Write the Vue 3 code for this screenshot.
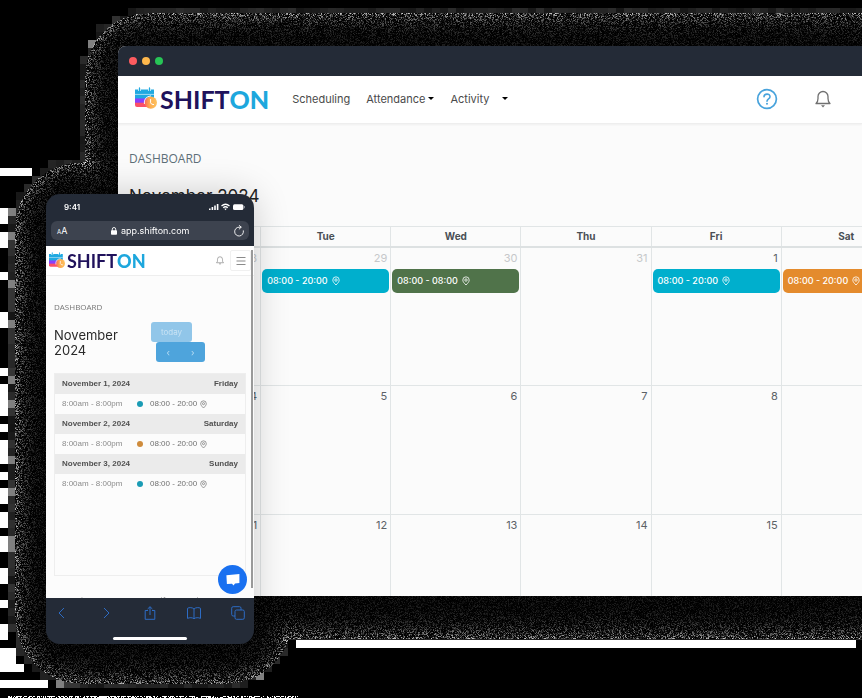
<script setup>
import { ref, onMounted, onBeforeUnmount } from 'vue'

const days = ['Mon', 'Tue', 'Wed', 'Thu', 'Fri', 'Sat', 'Sun']
const weeks = [
  [
    { n: 28, out: true },
    { n: 29, out: true, time: '08:00 - 20:00', tone: 'cyan' },
    { n: 30, out: true, time: '08:00 - 08:00', tone: 'green' },
    { n: 31, out: true },
    { n: 1, time: '08:00 - 20:00', tone: 'cyan' },
    { n: 2, time: '08:00 - 20:00', tone: 'orange' },
    { n: 3 }
  ],
  [4, 5, 6, 7, 8, 9, 10].map((n) => ({ n })),
  [11, 12, 13, 14, 15, 16, 17].map((n) => ({ n }))
]
const agenda = [
  { date: 'November 1, 2024', day: 'Friday', tone: 'cyan' },
  { date: 'November 2, 2024', day: 'Saturday', tone: 'orange' },
  { date: 'November 3, 2024', day: 'Sunday', tone: 'cyan' }
]

const grain = ref(null)

// Depth of a point inside a rounded rectangle; negative when outside.
function depth(x, y, l, t, r, b, rad) {
  const qx = Math.abs(x - (l + r) / 2) - (r - l) / 2 + rad
  const qy = Math.abs(y - (t + b) / 2) - (b - t) / 2 + rad
  const out = Math.hypot(Math.max(qx, 0), Math.max(qy, 0))
  return rad - out - Math.min(Math.max(qx, qy), 0)
}

function drawGrain() {
  const cv = grain.value
  if (!cv) return
  const w = (cv.width = cv.clientWidth)
  const h = (cv.height = cv.clientHeight)
  if (!w || !h) return
  const ctx = cv.getContext('2d')
  let seed = 7321
  const rnd = () => {
    seed = (Math.imul(seed, 1664525) + 1013904223) >>> 0
    return seed / 4294967296
  }
  const halo = (x, y) => {
    const a = depth(x, y, 85, 13, w + 400, 638, 62)
    const b = depth(x, y, 15, 162, 292, 683, 66)
    return { d: Math.max(a, b), both: a > -6 && b > -6 ? Math.min(a, b) : -99 }
  }
  ctx.fillStyle = '#000'
  ctx.fillRect(0, 0, w, h)

  ctx.fillStyle = '#fff'
  const bars = [
    [168, 8, 32], [208, 16, 16], [232, 16, 8], [272, 8, 8], [312, 16, 8],
    [368, 8, 8], [384, 32, 8], [424, 8, 8], [440, 24, 8], [472, 8, 8],
    [488, 16, 8], [512, 16, 8], [536, 16, 8], [568, 16, 8], [600, 8, 8],
    [624, 16, 8], [648, 16, 16], [664, 8, 24], [680, 8, 48]
  ]
  bars.forEach(([y, bh, bw]) => ctx.fillRect(0, y, bw, bh))
  ctx.fillRect(296, 640, w - 302, 8)

  for (let y = 0; y < h; y += 8) {
    for (let x = 0; x < w; x += 8) {
      const { d } = halo(x + 4, y + 4)
      if (d > -5 && d < 8) {
        const k = rnd()
        const g = Math.round(d < -1 ? (k > 0.86 ? 128 : 20 + k * 40) : 22 + k * 24)
        ctx.fillStyle = `rgb(${g},${g},${g})`
        ctx.fillRect(x, y, 8, 8)
      }
    }
  }

  const img = ctx.getImageData(0, 0, w, h)
  for (let y = 0; y < h; y++) {
    for (let x = 0; x < w; x++) {
      const { d, both } = halo(x, y)
      if (d < 0) continue
      let amp = 28 + 180 * Math.exp(-d / 9)
      if (both > -6) amp += 60 * Math.exp(-Math.abs(both) / 6) * Math.exp(-d / 14)
      const g = Math.round(amp * Math.pow(rnd(), 2.6))
      const i = (y * w + x) * 4
      img.data[i] = img.data[i + 1] = img.data[i + 2] = g
    }
  }
  ctx.putImageData(img, 0, 0)

  ctx.fillStyle = '#fff'
  for (let x = 8; x < 298; x++) {
    if (rnd() > 0.4) ctx.fillRect(x, 696, 1, 1)
    if (rnd() > 0.55) ctx.fillRect(x, 697, 1, 1)
  }
}

onMounted(() => {
  drawGrain()
  window.addEventListener('resize', drawGrain)
})
onBeforeUnmount(() => window.removeEventListener('resize', drawGrain))
</script>

<template>
  <svg class="defs" aria-hidden="true">
    <defs>
      <linearGradient id="calFill" x1="0" y1="0" x2="0" y2="1">
        <stop offset="0" stop-color="#1fa9e1" />
        <stop offset="0.48" stop-color="#1fa9e1" />
        <stop offset="0.54" stop-color="#8a3ffc" />
        <stop offset="0.72" stop-color="#8a3ffc" />
        <stop offset="0.8" stop-color="#fb5068" />
        <stop offset="1" stop-color="#fb5068" />
      </linearGradient>
      <linearGradient id="clockFill" x1="0" y1="0" x2="1" y2="0">
        <stop offset="0" stop-color="#fb6a55" />
        <stop offset="0.4" stop-color="#fdaa4e" />
        <stop offset="1" stop-color="#fdc25f" />
      </linearGradient>
    </defs>
    <symbol id="mark" viewBox="0 0 22 23">
      <path d="M0 2.5H19V20H2Q0 20 0 18Z" fill="url(#calFill)" />
      <path d="M0 7.4H19" stroke="#fff" stroke-width="0.6" />
      <path d="M4.500 1V4M14.500 1V4" stroke="#fff" stroke-width="2.600" />
      <path d="M4.500 1V4.300M14.500 1V4.300" stroke="#1fa9e1" stroke-width="1.300" stroke-linecap="round" />
      <circle cx="15.800" cy="15.600" r="6.200" fill="url(#clockFill)" />
      <path d="M15.600 12.500V15.800Q16 17.600 18.600 17.600" fill="none" stroke="#fff" stroke-width="1" stroke-linecap="round" />
      <path d="M9.400 17Q8.400 10 16 8.800" fill="none" stroke="#fff" stroke-width="0.900" />
    </symbol>
    <symbol id="pin" viewBox="0 0 10 12">
      <path d="M5 11C2.6 8.6 1 6.8 1 4.8a4 4 0 0 1 8 0C9 6.8 7.4 8.6 5 11Z" fill="none" stroke="currentColor" />
      <circle cx="5" cy="4.8" r="1.5" fill="none" stroke="currentColor" />
    </symbol>
    <symbol id="bell" viewBox="0 0 16 18">
      <path d="M1 13.5H15C13.4 12.3 13 10.8 13 8.5V6.5A5 5 0 0 0 3 6.5V8.5C3 10.8 2.6 12.3 1 13.5Z" fill="none" stroke="currentColor" stroke-width="1.3" stroke-linejoin="round" />
      <path d="M6 15.2H10L8 17.4Z" fill="currentColor" />
    </symbol>
  </svg>

  <main class="stage">
    <canvas ref="grain" class="grain" aria-hidden="true"></canvas>

    <section class="browser">
      <div class="titlebar">
        <span class="light red"></span>
        <span class="light amber"></span>
        <span class="light lime"></span>
      </div>
      <header class="topnav">
        <a href="#" class="logo">
          <svg class="mark"><use href="#mark" /></svg>
          <span>SHIFT<b>ON</b></span>
        </a>
        <nav class="links">
          <a href="#">Scheduling</a>
          <a href="#">Attendance<i class="caret"></i></a>
          <a href="#" class="wide">Activity<i class="caret"></i></a>
        </nav>
        <div class="tools">
          <button type="button" aria-label="Help">
            <svg class="help" viewBox="0 0 22 22">
              <circle cx="11" cy="11" r="9.4" fill="none" stroke="currentColor" stroke-width="1.7" />
              <path d="M8 8.8C8 5.2 14 5.2 14 8.7C14 10.8 11 10.9 11 13.2" fill="none" stroke="currentColor" stroke-width="1.6" stroke-linecap="round" />
              <circle cx="11" cy="15.8" r="1" fill="currentColor" />
            </svg>
          </button>
          <button type="button" aria-label="Notifications">
            <svg class="bell"><use href="#bell" /></svg>
          </button>
        </div>
      </header>
      <div class="content">
        <p class="crumb">DASHBOARD</p>
        <h1>November 2024</h1>
        <table class="calendar">
          <thead>
            <tr><th v-for="d in days" :key="d" scope="col">{{ d }}</th></tr>
          </thead>
          <tbody>
            <tr v-for="(week, i) in weeks" :key="i">
              <td v-for="c in week" :key="c.n">
                <div class="num" :class="{ out: c.out }">{{ c.n }}</div>
                <div v-if="c.time" class="event" :class="c.tone">
                  {{ c.time }}<svg class="pin"><use href="#pin" /></svg>
                </div>
              </td>
            </tr>
          </tbody>
        </table>
      </div>
    </section>

    <section class="phone">
      <div class="status">
        <span>9:41</span>
        <svg viewBox="0 0 36 8">
          <path d="M0 5.5h1.6V7H0ZM2.6 4h1.6v3H2.6ZM5.2 2.5h1.6V7H5.2ZM7.8 1h1.6v6H7.8Z" fill="#fff" />
          <path d="M12.5 3Q16.5 -0.6 20.5 3M14.2 4.8Q16.5 2.8 18.8 4.8" fill="none" stroke="#fff" stroke-width="1.3" />
          <path d="M15.2 5.8Q16.5 5 17.8 5.8L16.5 7.3Z" fill="#fff" />
          <rect x="24" y="1.3" width="10.4" height="5.6" rx="1.5" fill="#fff" />
          <path d="M35.3 3v2.2" stroke="#9aa0aa" />
        </svg>
      </div>
      <div class="address">
        <span class="aa"><small>A</small>A</span>
        <span class="url">
          <svg viewBox="0 0 6 8"><rect y="3.2" width="6" height="4.6" rx="0.8" fill="#fff" /><path d="M1.3 4V2.2a1.7 1.7 0 0 1 3.4 0V4" fill="none" stroke="#fff" stroke-width="0.9" /></svg>
          app.shifton.com
        </span>
        <button type="button" aria-label="Reload">
          <svg class="reload" viewBox="0 0 12 12"><path d="M10.4 5.8A4.4 4.4 0 1 1 6 2.2H8M6.2 0.4L8.2 2.2L6.2 4.1" fill="none" stroke="#fff" stroke-width="0.9" stroke-linecap="round" /></svg>
        </button>
      </div>
      <div class="page">
        <header class="mobilebar">
          <a href="#" class="logo small">
            <svg class="mark"><use href="#mark" /></svg>
            <span>SHIFT<b>ON</b></span>
          </a>
          <button type="button" class="alert" aria-label="Notifications"><svg><use href="#bell" /></svg></button>
          <button type="button" class="burger" aria-label="Menu">
            <svg viewBox="0 0 10 10"><path d="M0.5 1.5h9M0.5 5h9M0.5 8.5h9" stroke="#8b8b8b" /></svg>
          </button>
        </header>
        <p class="crumb">DASHBOARD</p>
        <div class="head">
          <h2>November 2024</h2>
          <div class="controls">
            <button type="button" class="today">today</button>
            <div class="pager">
              <button type="button" aria-label="Previous">‹</button>
              <button type="button" aria-label="Next">›</button>
            </div>
          </div>
        </div>
        <div class="agenda">
          <template v-for="a in agenda" :key="a.date">
            <div class="date"><span>{{ a.date }}</span><span>{{ a.day }}</span></div>
            <div class="shift">
              <span class="hours">8:00am - 8:00pm</span>
              <i class="dot" :class="a.tone"></i>
              <span>08:00 - 20:00</span>
              <svg class="pin"><use href="#pin" /></svg>
            </div>
          </template>
        </div>
        <p class="copy">Copyright © 2018-2024 Shifton. All rights reserved</p>
        <span class="thumb"></span>
        <button type="button" class="chat" aria-label="Chat">
          <svg viewBox="0 0 14 12"><path d="M0.4 1.2L13.4 0V8.9L9 9.4L7.5 11.5L6 9.7L0.9 10Z" fill="#fff" /></svg>
        </button>
      </div>
      <footer class="dock">
        <div class="icons">
          <button type="button" aria-label="Back"><svg viewBox="0 0 14 14"><path d="M9 2L4 7L9 12" /></svg></button>
          <button type="button" aria-label="Forward"><svg viewBox="0 0 14 14"><path d="M5 2L10 7L5 12" /></svg></button>
          <button type="button" aria-label="Share"><svg viewBox="0 0 14 14"><path d="M5 4.5H2.2V13.3H11.8V4.5H9M7 9V0.8M4.6 3L7 0.7L9.4 3" /></svg></button>
          <button type="button" aria-label="Bookmarks"><svg viewBox="0 0 14 14"><path d="M7 3C5.5 1.3 2 1.3 0.5 2.3V12.4C2.5 11.4 5.5 11.4 7 12.8C8.5 11.4 11.5 11.4 13.5 12.4V2.3C12 1.3 8.5 1.3 7 3V12.8" /></svg></button>
          <button type="button" aria-label="Tabs"><svg viewBox="0 0 14 14"><rect x="4" y="4" width="9.3" height="9.3" rx="1.5" /><path d="M4 10H2.2Q0.7 10 0.7 8.5V2.2Q0.7 0.7 2.2 0.7H8.5Q10 0.7 10 2.2V4" /></svg></button>
        </div>
        <span class="home"></span>
      </footer>
    </section>
  </main>
</template>

<style>
body {
  background: #000;
}
</style>

<style scoped>
* {
  box-sizing: border-box;
}
.defs {
  position: absolute;
  width: 0;
  height: 0;
}
button {
  display: flex;
  align-items: center;
  justify-content: center;
  padding: 0;
  border: 0;
  background: none;
  font: inherit;
  color: inherit;
}
a {
  color: inherit;
  text-decoration: none;
}
p,
h1,
h2 {
  margin: 0;
  font-weight: 400;
}
.stage {
  position: relative;
  min-height: 100vh;
  padding: 46px 0 102px 118px;
  overflow: hidden;
  background: #000;
  font-family: Inter, "Liberation Sans", sans-serif;
}
.grain {
  position: absolute;
  inset: 0;
  width: 100%;
  height: 100%;
}
.browser {
  position: relative;
  height: calc(100vh - 148px);
  min-height: 550px;
  overflow: hidden;
  border-radius: 8px 0 0 0;
  background: #fbfbfb;
}
.titlebar {
  display: flex;
  align-items: center;
  gap: 5px;
  height: 30px;
  padding-left: 11px;
  background: #242b37;
}
.light {
  width: 8px;
  height: 8px;
  border-radius: 50%;
}
.red { background: #fc5b5f; }
.amber { background: #fdb74c; }
.lime { background: #27c556; }
.topnav {
  display: flex;
  align-items: center;
  height: 48px;
  padding: 0 31px 2px 17px;
  background: #fff;
  border-bottom: 1px solid #eee;
  box-shadow: 0 1px 2px rgba(0, 0, 0, 0.05);
  color: #4a4a4a;
  font-size: 11px;
}
.logo {
  display: flex;
  align-items: center;
  gap: 3px;
  color: #20125c;
  font: 700 25px/28px Lato, sans-serif;
}
.logo b {
  color: #1da7dd;
}
.mark {
  width: 22px;
  height: 23px;
}
.links {
  display: flex;
  gap: 16px;
  margin-left: 23px;
}
.links a {
  display: flex;
  align-items: center;
  gap: 3px;
}
.links .wide {
  gap: 13px;
}
.caret {
  border: 3px solid transparent;
  border-top-color: #000;
  border-bottom: 0;
}
.tools {
  display: flex;
  align-items: center;
  gap: 37px;
  margin-left: auto;
}
.help {
  width: 22px;
  height: 22px;
  color: #48a3dc;
}
.bell {
  width: 16px;
  height: 18px;
  color: #707070;
}
.content {
  padding: 26px 0 0 11px;
}
.crumb {
  color: #5d6f78;
  font: 12px/18px "Open Sans", sans-serif;
}
h1 {
  margin-top: 15px;
  color: #222;
  font-size: 17px;
  line-height: 26px;
}
.calendar {
  width: 912px;
  margin-top: 17px;
  margin-left: 1px;
  table-layout: fixed;
  border-collapse: collapse;
}
th,
td {
  padding: 0;
  border: 1px solid #e1e5e6;
}
th {
  height: 20px;
  border-bottom: 2px solid #dde1e2;
  color: #4a4f55;
  font-size: 10px;
  font-weight: 700;
  line-height: 17px;
}
td {
  height: 129px;
  vertical-align: top;
}
tbody tr:first-child td {
  height: 139px;
}
.num {
  padding: 3px 3px 0 0;
  color: #5c6166;
  font-size: 11px;
  line-height: 14px;
  text-align: right;
}
.num.out {
  color: #c6c8ca;
}
.event {
  display: flex;
  align-items: center;
  gap: 4px;
  height: 24px;
  margin: 4px 1px 0;
  padding-left: 5px;
  border-radius: 5px;
  color: #fff;
  font-size: 9px;
  font-weight: 500;
}
.pin {
  width: 8px;
  height: 10px;
}
.cyan { background: #00afcd; }
.green { background: #50734a; }
.orange { background: #e48b2d; }

.phone {
  position: absolute;
  left: 46px;
  top: 194px;
  display: flex;
  flex-direction: column;
  width: 208px;
  height: 450px;
  overflow: hidden;
  border-radius: 14px;
  background: #242b37;
  box-shadow: 0 0 36px rgba(0, 0, 0, 0.2);
  color: #fff;
}
.status {
  display: flex;
  align-items: center;
  justify-content: space-between;
  height: 27px;
  padding: 0 9px 2px 18px;
  font-size: 8px;
  font-weight: 600;
}
.status svg {
  width: 36px;
  height: 8px;
}
.address {
  display: flex;
  align-items: center;
  justify-content: space-between;
  height: 19px;
  margin: 0 5px;
  padding: 0 4px 0 6px;
  border-radius: 6px;
  background: #3d434f;
  font-size: 9px;
}
.aa small {
  font-size: 6px;
}
.url {
  display: flex;
  align-items: center;
  gap: 4px;
}
.url svg {
  width: 6px;
  height: 8px;
}
.reload {
  width: 12px;
  height: 12px;
}
.page {
  position: relative;
  flex: 1;
  margin-top: 6px;
  overflow: hidden;
  background: #fcfcfc;
}
.mobilebar {
  display: flex;
  align-items: center;
  height: 30px;
  padding: 0 3px;
  background: #fff;
  border-bottom: 1px solid #eee;
}
.small {
  gap: 2px;
  font-size: 18px;
}
.small .mark {
  width: 16px;
  height: 17px;
}
.alert {
  margin-left: auto;
  color: #808080;
}
.alert svg {
  width: 8px;
  height: 9px;
}
.burger {
  width: 21px;
  height: 21px;
  margin-left: 6px;
  border: 1px solid #f0f0f0;
  border-radius: 2px;
}
.burger svg {
  width: 10px;
  height: 10px;
}
.page .crumb {
  padding: 24px 8px 0;
  color: #777;
  font-size: 8px;
  line-height: 14px;
}
.head {
  display: flex;
  padding: 8px 8px 0;
}
h2 {
  width: 92px;
  padding-top: 6px;
  color: #2a2a2a;
  font-size: 13px;
  line-height: 15px;
}
.controls {
  padding-left: 5px;
}
.today {
  width: 41px;
  height: 20px;
  border-radius: 3px;
  background: #91c6e9;
  color: #c7e2f4;
  font-size: 8px;
}
.pager {
  display: flex;
  justify-content: space-around;
  width: 49px;
  height: 20px;
  margin-left: 5px;
  border-radius: 3px;
  background: #4ea4dc;
  color: #b7dcf3;
  font-size: 9px;
}
.agenda {
  height: 203px;
  margin: 11px 8px 0;
  border: 1px solid #eee;
  font: 8px/12px "Liberation Sans", sans-serif;
}
.date,
.shift {
  display: flex;
  align-items: center;
  height: 20px;
  padding: 0 7px;
}
.date {
  justify-content: space-between;
  background: #ebebeb;
  color: #505050;
  font-weight: 700;
}
.shift {
  color: #707070;
}
.hours {
  width: 75px;
  color: #8c8c8c;
}
.dot {
  width: 6px;
  height: 6px;
  margin-right: 7px;
  border-radius: 50%;
}
.dot.cyan { background: #1b9cb5; }
.dot.orange { background: #cf8c3c; }
.shift .pin {
  width: 7px;
  height: 9px;
  margin-left: 3px;
}
.copy {
  padding: 19px 12px 0;
  color: #888;
  font-size: 8px;
  line-height: 12px;
  white-space: nowrap;
}
.thumb {
  position: absolute;
  top: 4px;
  right: 1px;
  bottom: 10px;
  width: 2px;
  background: #999;
}
.chat {
  position: absolute;
  right: 7px;
  bottom: 4px;
  width: 29px;
  height: 29px;
  border-radius: 50%;
  background: #1970f0;
}
.chat svg {
  width: 14px;
  height: 12px;
}
.dock {
  display: flex;
  flex-direction: column;
  align-items: center;
  justify-content: space-between;
  height: 46px;
  padding: 8px 9px 4px;
}
.icons {
  display: flex;
  justify-content: space-between;
  width: 100%;
}
.icons svg {
  width: 14px;
  height: 14px;
  fill: none;
  stroke: #2d6cc4;
  stroke-width: 1;
}
.home {
  width: 74px;
  height: 3px;
  border-radius: 2px;
  background: #fff;
}
</style>
